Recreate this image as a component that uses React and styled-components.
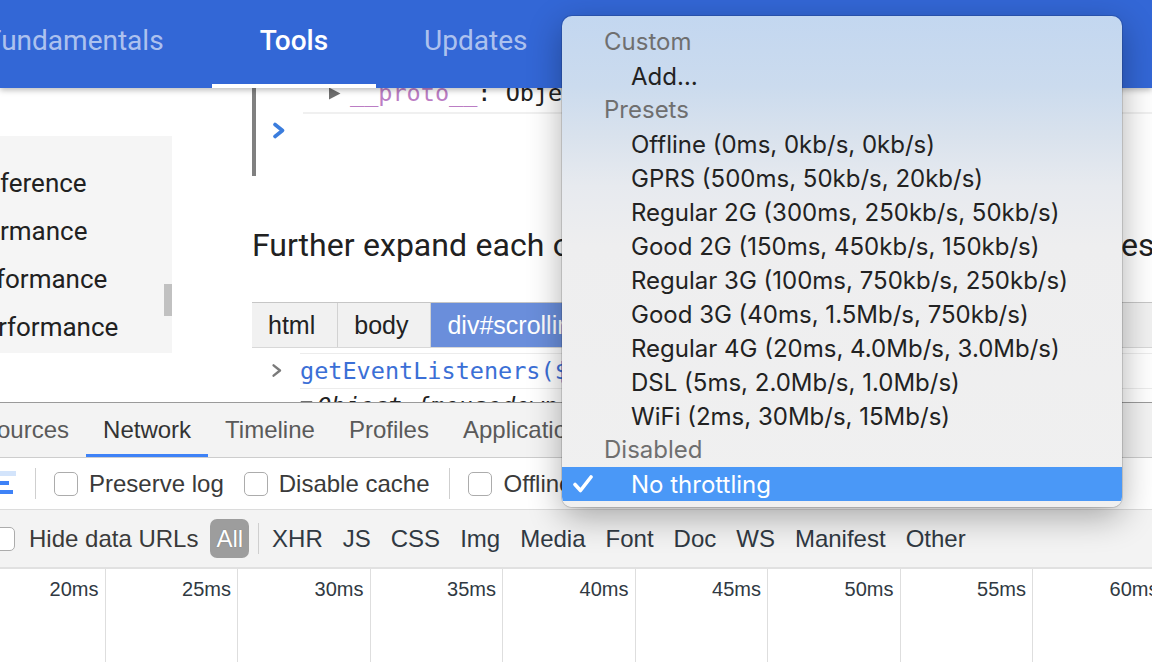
import React from 'react';
import styled, { createGlobalStyle } from 'styled-components';

const GlobalStyle = createGlobalStyle`
  html, body {
    margin: 0;
    padding: 0;
  }
  body {
    width: 1152px;
    height: 662px;
    overflow: hidden;
    background: #fff;
    font-family: Roboto, "Liberation Sans", sans-serif;
  }
`;

const Screen = styled.div`
  position: relative;
  width: 1152px;
  height: 662px;
  overflow: hidden;
  display: flex;
  flex-direction: column;
`;

/* ---------- site header ---------- */

const Header = styled.header`
  position: relative;
  z-index: 2;
  flex: none;
  height: 88px;
  background: #3367d6;
  box-shadow: 0 2px 6px rgba(0, 0, 0, 0.28);
  display: flex;
`;

const Nav = styled.nav`
  display: flex;
  margin-left: -62px;
`;

const NavTab = styled.a`
  display: flex;
  align-items: center;
  padding: 0 48px 8px;
  font-size: 28px;
  font-weight: ${(p) => (p.$active ? 500 : 400)};
  color: ${(p) => (p.$active ? '#fff' : 'rgba(255, 255, 255, 0.62)')};
  box-shadow: ${(p) => (p.$active ? 'inset 0 -4px 0 #fff' : 'none')};
  white-space: nowrap;
`;

/* ---------- page body ---------- */

const PageBody = styled.div`
  flex: none;
  height: 314px;
  display: flex;
  overflow: hidden;
`;

const Sidebar = styled.aside`
  flex: none;
  width: 172px;
  height: 217px;
  margin-top: 48px;
  background: #f5f5f5;
  display: flex;
`;

const SideList = styled.ul`
  flex: 1;
  margin: 0;
  padding: 23px 0 0;
  list-style: none;
  overflow: hidden;
`;

const SideItem = styled.li`
  height: 48px;
  line-height: 48px;
  font-size: 26px;
  color: #212121;
  white-space: nowrap;
  margin-left: ${(p) => p.$shift || 0}px;
`;

const ScrollTrack = styled.div`
  flex: none;
  width: 8px;
`;

const ScrollThumb = styled.div`
  margin-top: 148px;
  height: 32px;
  background: #c1c1c1;
`;

const Main = styled.main`
  flex: 1;
  min-width: 0;
  margin-left: 80px;
  display: flex;
  flex-direction: column;
`;

const CodeBlock = styled.div`
  flex: none;
  margin-top: -8px;
  height: 96px;
  border-left: 4px solid #808080;
  display: flex;
  flex-direction: column;
  font-family: "DejaVu Sans Mono", "Liberation Mono", monospace;
  font-size: 23.5px;
`;

const ProtoLine = styled.div`
  height: 26px;
  display: flex;
  align-items: center;
  gap: 9px;
  padding-left: 72px;
  color: #222;
  white-space: nowrap;
`;

const Proto = styled.span`
  color: #bb7dc4;
`;

const CodeRule = styled.div`
  margin: 6px 0 0 47px;
  border-top: 2px solid #f0f0f0;
`;

const PromptRow = styled.div`
  height: 32px;
  display: flex;
  align-items: center;
  padding-left: 16px;
`;

const Paragraph = styled.p`
  margin: 45px 0 0;
  font-size: 32px;
  line-height: 48px;
  color: #212121;
  white-space: nowrap;
  word-spacing: 0.6px;
`;

const Figure = styled.div`
  margin-top: 33px;
  font-family: "Liberation Sans", Arial, sans-serif;
`;

const Crumbs = styled.div`
  height: 44px;
  display: flex;
  background: #f1f1f1;
  border-top: 1px solid #c6c6c6;
  border-bottom: 1px solid #d8d8d8;
`;

const Crumb = styled.div`
  display: flex;
  align-items: center;
  padding: 0 22px 0 16px;
  font-size: 25px;
  white-space: nowrap;
  color: ${(p) => (p.$active ? '#fff' : '#222')};
  background: ${(p) => (p.$active ? '#6a8edb' : 'transparent')};
  border-right: 1px solid #d2d2d2;
`;

const ConsoleRows = styled.div`
  padding-top: 5px;
  font-family: "DejaVu Sans Mono", "Liberation Mono", monospace;
  font-size: 23.5px;
`;

const ConsoleRow = styled.div`
  display: flex;
  height: 35px;
`;

const Gutter = styled.div`
  flex: none;
  width: 48px;
  display: flex;
  align-items: center;
  padding-left: 19px;
  box-sizing: border-box;
`;

const ConsoleText = styled.div`
  flex: 1;
  display: flex;
  align-items: center;
  gap: 4px;
  border-top: 1px solid #ececec;
  white-space: nowrap;
  color: ${(p) => p.$color || '#222'};
`;

/* ---------- devtools ---------- */

const DevTools = styled.section`
  flex: 1;
  display: flex;
  flex-direction: column;
  border-top: 1px solid #9a9a9a;
  font-family: "Liberation Sans", Arial, sans-serif;
  font-size: 24px;
  color: #303942;
`;

const TabBar = styled.div`
  flex: none;
  height: 54px;
  display: flex;
  background: #f3f3f3;
  border-bottom: 1px solid #cdcdcd;
`;

const TabRow = styled.div`
  display: flex;
  margin-left: -36px;
`;

const Tab = styled.div`
  display: flex;
  align-items: center;
  padding: 0 17px;
  white-space: nowrap;
  color: ${(p) => (p.$active ? '#333' : '#5a5a5a')};
  box-shadow: ${(p) => (p.$active ? 'inset 0 -3px 0 #3e82f7' : 'none')};
`;

const Toolbar = styled.div`
  flex: none;
  height: 51px;
  display: flex;
  align-items: center;
  background: #fff;
  border-bottom: 1px solid #dcdcdc;
`;

const FilterBar = styled.div`
  flex: none;
  height: 57px;
  display: flex;
  align-items: center;
  background: #f3f3f3;
  border-bottom: 2px solid #e1e1e1;
`;

const Sep = styled.div`
  flex: none;
  width: 1px;
  height: 31px;
  background: #cfcfcf;
  margin: 0 ${(p) => p.$right ?? 18}px 0 ${(p) => p.$left ?? 19}px;
`;

const CheckGroup = styled.label`
  display: flex;
  align-items: center;
  gap: ${(p) => p.$gap ?? 11}px;
  margin: 0 20px 0 ${(p) => p.$offset ?? 0}px;
  white-space: nowrap;
  color: #3a3a3a;
`;

const Box = styled.span`
  flex: none;
  width: 24px;
  height: 24px;
  box-sizing: border-box;
  border: 1.5px solid #acacac;
  border-radius: 5px;
  background: #fff;
`;

const AllPill = styled.span`
  display: flex;
  align-items: center;
  height: 39px;
  padding: 0 6px;
  margin-left: -8px;
  border-radius: 7px;
  background: #9d9d9d;
  color: #fff;
  text-shadow: 0 0 1px rgba(0, 0, 0, 0.35);
`;

const FilterBtn = styled.span`
  padding: 0 6px;
  margin: 0 4px;
  white-space: nowrap;
`;

const Grid = styled.div`
  flex: 1;
  display: flex;
  margin-left: -27px;
  font-size: 20px;
  color: #303942;
`;

const GridCell = styled.div`
  flex: none;
  width: 132.5px;
  box-sizing: border-box;
  border-right: 1px solid #dedede;
  padding: 9px 6px 0 0;
  text-align: right;
`;

/* ---------- throttling menu ---------- */

const Menu = styled.div`
  position: absolute;
  left: 562px;
  top: 16px;
  width: 560px;
  z-index: 10;
  padding: 9px 0 6px;
  border-radius: 10px;
  overflow: hidden;
  background: linear-gradient(
    180deg,
    #c3d7f0 0px,
    #cbdbee 70px,
    #d9e2ed 120px,
    #e7eaef 170px,
    #eeeeef 230px,
    #f0f0f0 100%
  );
  box-shadow: 0 0 0 1px rgba(0, 0, 0, 0.13), 0 10px 34px rgba(0, 0, 0, 0.32);
  font-family: Inter, "Open Sans", sans-serif;
  font-size: 24px;
`;

const MenuHeading = styled.div`
  height: 34px;
  line-height: 34px;
  padding-left: 42px;
  color: #6f6f6f;
`;

const MenuItem = styled.div`
  height: 34px;
  display: flex;
  align-items: center;
  white-space: nowrap;
  color: ${(p) => (p.$selected ? '#fff' : '#222')};
  background: ${(p) => (p.$selected ? '#4a98f7' : 'transparent')};
`;

const CheckSlot = styled.span`
  flex: none;
  width: 69px;
  box-sizing: border-box;
  padding-left: 11px;
  display: flex;
  align-items: center;
`;

const Chevron = ({ color = '#3b7ddd', width = 14, height = 17, stroke = 3.6 }) => (
  <svg width={width} height={height} viewBox="0 0 14 17">
    <path d="M3 2.5 L10.5 8.5 L3 14.5" fill="none" stroke={color} strokeWidth={stroke} strokeLinecap="round" strokeLinejoin="round" />
  </svg>
);

const presets = [
  'Offline (0ms, 0kb/s, 0kb/s)',
  'GPRS (500ms, 50kb/s, 20kb/s)',
  'Regular 2G (300ms, 250kb/s, 50kb/s)',
  'Good 2G (150ms, 450kb/s, 150kb/s)',
  'Regular 3G (100ms, 750kb/s, 250kb/s)',
  'Good 3G (40ms, 1.5Mb/s, 750kb/s)',
  'Regular 4G (20ms, 4.0Mb/s, 3.0Mb/s)',
  'DSL (5ms, 2.0Mb/s, 1.0Mb/s)',
  'WiFi (2ms, 30Mb/s, 15Mb/s)',
];

const filters = ['XHR', 'JS', 'CSS', 'Img', 'Media', 'Font', 'Doc', 'WS', 'Manifest', 'Other'];
const ticks = [20, 25, 30, 35, 40, 45, 50, 55, 60];

export default function App() {
  return (
    <Screen>
      <GlobalStyle />

      <Header>
        <Nav>
          <NavTab>Fundamentals</NavTab>
          <NavTab $active>Tools</NavTab>
          <NavTab>Updates</NavTab>
        </Nav>
      </Header>

      <PageBody>
        <Sidebar>
          <SideList>
            <SideItem>ference</SideItem>
            <SideItem>rmance</SideItem>
            <SideItem $shift={-4}>formance</SideItem>
            <SideItem $shift={-2}>rformance</SideItem>
          </SideList>
          <ScrollTrack>
            <ScrollThumb />
          </ScrollTrack>
        </Sidebar>

        <Main>
          <CodeBlock>
            <ProtoLine>
              <svg width="13" height="13" viewBox="0 0 13 13">
                <path d="M1 0.5 L12.5 6.5 L1 12.5 Z" fill="#6f6f6f" />
              </svg>
              <span>
                <Proto>__proto__</Proto>: Object
              </span>
            </ProtoLine>
            <CodeRule />
            <PromptRow>
              <Chevron />
            </PromptRow>
          </CodeBlock>

          <Paragraph>Further expand each object in the array to explore its properties</Paragraph>

          <Figure>
            <Crumbs>
              <Crumb>html</Crumb>
              <Crumb>body</Crumb>
              <Crumb $active>div#scrollingElement.scrolling-element</Crumb>
            </Crumbs>
            <ConsoleRows>
              <ConsoleRow>
                <Gutter>
                  <Chevron color="#7a7a7a" width={12} height={15} stroke={2.8} />
                </Gutter>
                <ConsoleText $color="#3b6fd6">getEventListeners($0)</ConsoleText>
              </ConsoleRow>
              <ConsoleRow>
                <Gutter />
                <ConsoleText>
                  <svg width="13" height="12" viewBox="0 0 13 12">
                    <path d="M0.5 1 L12.5 1 L6.5 11.5 Z" fill="#6f6f6f" />
                  </svg>
                  <i>Object {'{'}mousedown: Array[1], mouseup: Array[1]{'}'}</i>
                </ConsoleText>
              </ConsoleRow>
            </ConsoleRows>
          </Figure>
        </Main>
      </PageBody>

      <DevTools>
        <TabBar>
          <TabRow>
            <Tab>Sources</Tab>
            <Tab $active>Network</Tab>
            <Tab>Timeline</Tab>
            <Tab>Profiles</Tab>
            <Tab>Application</Tab>
            <Tab>Security</Tab>
            <Tab>Audits</Tab>
          </TabRow>
        </TabBar>

        <Toolbar>
          <svg width="16" height="26" viewBox="0 0 16 26" style={{ flex: 'none' }}>
            <rect x="0" y="0" width="16" height="5" fill="#d3e4fb" />
            <rect x="0" y="10" width="9" height="4" fill="#3e82f7" />
            <rect x="0" y="19" width="13" height="4" fill="#3e82f7" />
          </svg>
          <Sep />
          <CheckGroup>
            <Box />
            Preserve log
          </CheckGroup>
          <CheckGroup>
            <Box />
            Disable cache
          </CheckGroup>
          <Sep $left={0} />
          <CheckGroup>
            <Box />
            Offline
          </CheckGroup>
        </Toolbar>

        <FilterBar>
          <CheckGroup $offset={-9} $gap={14}>
            <Box />
            Hide data URLs
          </CheckGroup>
          <AllPill>All</AllPill>
          <Sep $left={9} $right={3} />
          {filters.map((f) => (
            <FilterBtn key={f}>{f}</FilterBtn>
          ))}
        </FilterBar>

        <Grid>
          {ticks.map((t) => (
            <GridCell key={t}>{t}ms</GridCell>
          ))}
        </Grid>
      </DevTools>

      <Menu>
        <MenuHeading>Custom</MenuHeading>
        <MenuItem>
          <CheckSlot />
          Add…
        </MenuItem>
        <MenuHeading>Presets</MenuHeading>
        {presets.map((p) => (
          <MenuItem key={p}>
            <CheckSlot />
            {p}
          </MenuItem>
        ))}
        <MenuHeading>Disabled</MenuHeading>
        <MenuItem $selected>
          <CheckSlot>
            <svg width="20" height="18" viewBox="0 0 20 18">
              <path d="M2 9.5 L7.5 15.5 L18 2" fill="none" stroke="#fff" strokeWidth="3.6" strokeLinecap="round" strokeLinejoin="round" />
            </svg>
          </CheckSlot>
          No throttling
        </MenuItem>
      </Menu>
    </Screen>
  );
}
